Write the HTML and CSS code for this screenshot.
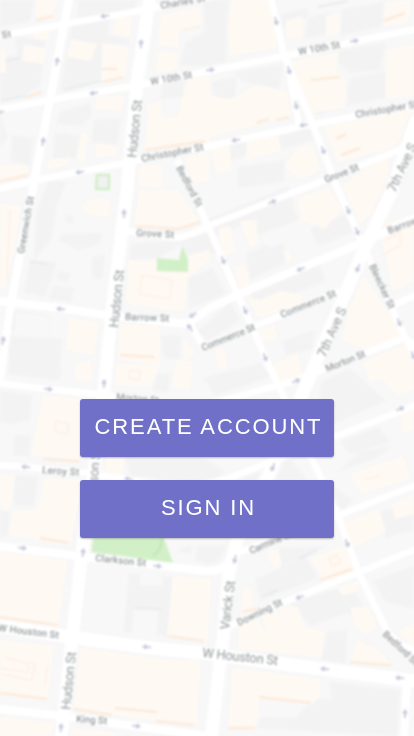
FILE: index.html
```html
<!DOCTYPE html>
<html lang="en">
<head>
<meta charset="utf-8">
<meta name="viewport" content="width=device-width, initial-scale=1">
<title>Welcome</title>
<link rel="stylesheet" href="styles.css">
</head>
<body>
<main class="welcome">
<svg class="map" viewBox="0 0 414 736" aria-hidden="true">
<defs>
<path id="arrow" d="M-4 0H3M0.5-2L3.5 0L0.5 2"/>
</defs>
<g class="soft">
<!-- Grey buildings -->
<g class="grey">
<path d="M0 0H34L30 21L0 27ZM78 0H138L134 10L77 20ZM72 24L110 17L108 36L127 38L130 45L102 43L101 80L60 91ZM15 36L45 40L44 57L40 86L20 98L0 101V58L17 55ZM60 112L90 103L92 115L81 126L57 124ZM94 120L121 118L117 145L92 142ZM55 132L80 136L76 158L53 158ZM0 115L8 137L0 147ZM13 135L33 138L30 166L10 160Z"/>
<path d="M158 4L181 1L155 11ZM185 42L200 35L210 30V66L180 66ZM163 83L184 80L183 97L160 99ZM204 0H228L226 62L204 66ZM281 14L308 8L307 18L282 27ZM307 18L329 12L328 34L304 39ZM342 9L384 2L382 26L340 36ZM340 50L386 43L380 70L350 73L337 62ZM235 72L283 64L279 89L260 86L240 80ZM212 82L236 77L235 106L214 95ZM350 78L389 70L386 98L346 106ZM315 88L326 87L324 115L313 113ZM367 120L384 117L381 134L365 134ZM228 142L251 136L250 155L230 160ZM278 136L310 127L313 140L280 150ZM238 167L285 160L284 181L238 188Z"/>
<path d="M48 180L66 182L57 205L51 240L34 260L37 210ZM62 234L101 233V244L78 250L59 241ZM30 261L57 262L45 297L24 292ZM53 286L75 288L71 302L49 299ZM92 257L105 255L102 280L92 277ZM58 270L70 274L67 283L57 279ZM66 215H73V223H66ZM131 244L178 240L213 232L223 250L190 260L180 245L158 258L130 260ZM188 278L213 268L226 294L190 308ZM10 309L50 316L48 334L9 331ZM7 336L62 339L59 380L10 374ZM160 336L181 335L180 360L164 358ZM196 332L231 302L240 320L208 341ZM205 220L288 187L294 203L218 235ZM258 215L291 202L300 221L257 235ZM246 254L279 238L292 260L250 280ZM250 293L320 264L325 281L255 311ZM310 229L350 212L353 232L319 246Z"/>
<path d="M0 390L32 396L30 420L10 424L0 421ZM10 362H59L62 374L57 380L8 374ZM156 374L171 373L168 392L153 391ZM15 435L30 436L30 456L13 455ZM15 475L38 477L34 506L14 505ZM0 510L10 513L8 536H0ZM125 456L205 458L224 471L215 485L130 476ZM282 341L315 330L312 349L286 355ZM363 322L382 319L379 345L361 341ZM321 382L350 368L386 401L333 424L318 416ZM340 442L378 427L391 442L350 454ZM337 473L360 451L391 446L375 459L342 470ZM204 378L260 363L270 377L215 396ZM335 487L352 500L345 510L335 504ZM375 514L414 500V530L386 538ZM243 478L290 459L310 483H235Z"/>
<path d="M128 573L173 577L167 637L157 635L158 609L134 608L132 633L123 632L127 590ZM180 547L193 546L190 554L178 552ZM197 546H210V560L196 562ZM255 579L306 557L318 578L260 601ZM290 603L340 588L350 612L310 626ZM328 632L347 630L346 663L321 660ZM373 581L414 566V609L386 602ZM276 549L325 546L307 557L280 567ZM330 682L400 690L397 736L256 728L263 716L295 718L315 697L331 700ZM204 546H230L215 563L204 565ZM340 590L352 585L362 605L350 615Z"/>
</g>
<!-- Courtyards and open lots -->
<path class="lot" d="M16 312L49 317L47 338L14 333ZM262 236L300 219L311 230L270 249ZM259 707L287 705L285 718L260 717ZM140 573L163 577L162 586L140 585ZM84 561L128 572L123 632L83 625Z"/>
<!-- Cream buildings -->
<g class="cream">
<path d="M36 0H57L52 17L35 20ZM35 31L50 30L49 40L34 39ZM24 44L47 49L43 64L22 61ZM0 48L6 53V73H0ZM115 17L133 18L129 37L113 33ZM71 39L97 44L91 61L67 57ZM102 43L128 48L125 77L102 82ZM97 97L125 96L121 111L95 109ZM81 132L88 134L84 163L77 160ZM48 161L70 157L68 165L47 170ZM97 143L119 147L115 155L94 158ZM0 165L28 165L28 174L0 180ZM161 16L199 6L202 24L180 29L178 48L158 44ZM158 50L178 54L178 69L155 74ZM188 79L210 76V143L145 150L148 103L162 101L161 117H177Z"/>
<path d="M231 0H270L277 47L230 56L228 30ZM286 21L303 15V36L288 40ZM325 16L340 14V33L326 37ZM385 3L411 0L408 23L384 26ZM289 62L338 52L337 73L346 80L345 107L312 113L290 75ZM386 50L414 44V96L385 99ZM204 95L231 99L258 84L287 92L291 116L204 138ZM324 127L414 109V135L384 150L338 163ZM247 139L278 135L282 150L245 161ZM211 149L230 146L232 170L217 174ZM296 149L312 145L321 170L300 179L284 167ZM344 184L387 154L389 171L375 208L360 224L340 180ZM140 166L162 164L162 188L138 185ZM184 158L210 150V181L193 183Z"/>
<path d="M139 190L178 191L199 220L180 229L134 225ZM80 205L97 198L110 201L108 218L85 213ZM0 203L21 206L14 250L5 290H0ZM129 260L157 262L157 271H188L187 256L210 249V260L188 277L184 312L126 303ZM69 318L99 323L94 355L66 349ZM120 324L160 326L160 366L118 359ZM183 337L195 353L184 361ZM298 198L328 188L342 209L325 229L302 220ZM218 229L230 226L236 251L223 256ZM240 221L253 220L260 242L250 247ZM234 267L244 265L250 284L240 288ZM283 251L289 249L292 260L286 264ZM248 297L260 300L280 291L302 294L302 303L258 318ZM258 330L274 325L278 338L263 342ZM380 226L414 213V281L392 291ZM364 276L391 316L402 334L370 350L342 341L349 302ZM215 350L223 348L228 368L219 370Z"/>
<path d="M43 395L95 400L82 460L31 455ZM76 362L91 360L92 383L74 378ZM116 364L160 366L151 386L114 386ZM176 359L193 362L190 390L172 388ZM108 455L125 456L122 476L104 474ZM0 474L15 476L10 510H0ZM45 478L82 480L70 546L39 540L9 535L13 512L38 508ZM273 364L298 354L302 375L280 383ZM363 362L414 341V390L397 395L383 379L370 382ZM400 410L414 405V430L402 434ZM350 474L403 456L411 478L361 494ZM343 523L379 509L386 532L350 549ZM391 504L414 495V514L395 519Z"/>
<path d="M0 551L67 561L58 626L0 617ZM0 640L53 646L48 701L0 694ZM77 647L124 654L161 659L201 661L196 726L74 710ZM173 576L210 579L204 642L167 637ZM0 717L54 723L52 736H0ZM70 728L118 733V736H68ZM204 579L211 580L207 641H204ZM310 558L344 546L356 573L325 582ZM266 552L278 549L282 564L274 570ZM244 587L252 590L253 612L240 614ZM337 588L357 581L361 590L343 596ZM350 607L369 607L377 625L367 635L356 627ZM239 620L256 618L268 637L262 615L277 611L285 628L279 608L298 606L305 628L324 631L322 657L238 649ZM350 662L357 640L380 651L391 664ZM233 668L321 679L320 696L312 705L259 698L256 730L228 728ZM398 632L414 623V647Z"/>
</g>
<g class="edge">
<path d="M36 20L53 16M102 69L117 69M103 82L123 77M26 97L42 92M146 150L205 141M136 226L178 229L200 222M43 459L79 461M40 538L69 543M0 617L58 625M74 709L112 715M115 708L157 712M156 721L194 725M168 636L204 641M0 693L47 699M228 728H255M259 697L311 703M350 662L391 665M256 123L269 119M276 120L289 117M341 155L360 148M311 80L340 77M383 21L405 13M0 181L28 175M120 355L154 357M336 139L346 134M242 612L257 609M320 580L353 569"/>
</g>
<g class="outline">
<path d="M142 275L172 280L170 299L140 294ZM56 421L69 424L67 434L54 431ZM130 370L140 371L139 380L129 379ZM5 658L35 664L32 680L0 674M47 666L45 686M26 664L30 669L26 673M337 555L341 563L332 566L329 558ZM366 480L381 475M182 30L201 26M385 240L400 232L401 245L383 255M0 668L27 672M10 210L7 280"/>
</g>
<path class="shade" d="M6 61L20 58M26 96L1 101M317 7L348 1M263 596L278 590M299 559L317 550M64 90L101 81M30 261L48 264M134 608L160 609"/>
<!-- Parks -->
<g class="park">
<path d="M157 258L179 260L182 246L188 259V272L157 271ZM91 538H164L173 563L91 552Z"/>
</g>
<path class="garden" d="M97 175H109V189H96Z"/>
<path class="parkpath" d="M162 538L160 549L153 556"/>
<!-- Streets -->
<g class="casing">
<path d="M150-4L137 83L127 190L112 310L100 430L83 546L72 640L61 740"/>
<path d="M417 118L391 193L367 243L317 360L301 397L271 470L234 543L229 573L224 629L211 740"/>
</g>
<g class="road">
<path class="wide" d="M150-4L137 83L127 190L112 310L100 430L83 546L72 640L61 740"/>
<path class="wide" d="M417 118L391 193L367 243L317 360L301 397L271 470L237 540L229 573L224 629L211 740"/>
<path class="wide" d="M-2 626L70 637L143 647L210 654L321 669L416 681"/>
<path class="mid" d="M69-2L50 100L35 177L11 303L0 380"/>
<path d="M-2 36L65 24L143 10L210-3"/>
<path d="M-2 110L50 100L133 86L210 71L284 56L416 29"/>
<path d="M-2 189L37 180L130 162L210 146L304 126L416 105"/>
<path d="M177 160L204 217L237 293L271 370L284 397L314 463L337 513L359 573L386 629Q396 645 416 651"/>
<path d="M271-2L284 55L311 120L337 187L371 263L391 307L416 360"/>
<path d="M287 60L299 126"/>
<path d="M128 231L177 238Q190 236 208 226L325 180L404 148L416 143"/>
<path class="mid" d="M-2 301L60 308L112 316L187 324L210 308L237 295L361 243L416 218"/>
<path d="M189 323L204 347L277 317L340 291M391 306L416 295"/>
<path d="M-2 383L48 389L103 395L185 410L237 397L297 380L325 369L404 338L416 345"/>
<path d="M-2 465L27 467L87 473L180 488L224 480L334 437L416 405"/>
<path d="M234 554L334 517L416 485"/>
<path class="mid" d="M-2 546L77 556L206 571Q228 572 231 555"/>
<path d="M225 628L287 601L357 573L416 549"/>
<path class="mid" d="M-2 709L63 716L133 726L214 737"/>
<path class="mid" d="M407 680L404 740"/>
</g>
<!-- One-way arrows -->
<g class="arrows">
<use href="#arrow" transform="translate(105 16) rotate(170)"/>
<use href="#arrow" transform="translate(141 44) rotate(-87)"/>
<use href="#arrow" transform="translate(57 62) rotate(-80)"/>
<use href="#arrow" transform="translate(94 93) rotate(170)"/>
<use href="#arrow" transform="translate(43 142) rotate(-80)"/>
<use href="#arrow" transform="translate(80 172) rotate(170)"/>
<use href="#arrow" transform="translate(0 112) rotate(170)"/>
<use href="#arrow" transform="translate(210 70) rotate(-10)"/>
<use href="#arrow" transform="translate(276 21) rotate(75)"/>
<use href="#arrow" transform="translate(354 41) rotate(-10)"/>
<use href="#arrow" transform="translate(289 70) rotate(75)"/>
<use href="#arrow" transform="translate(296 105) rotate(78)"/>
<use href="#arrow" transform="translate(304 125) rotate(170)"/>
<use href="#arrow" transform="translate(236 140) rotate(170)"/>
<use href="#arrow" transform="translate(323 150) rotate(70)"/>
<use href="#arrow" transform="translate(124 214) rotate(-87)"/>
<use href="#arrow" transform="translate(61 309) rotate(185)"/>
<use href="#arrow" transform="translate(3 341) rotate(-80)"/>
<use href="#arrow" transform="translate(193 315) rotate(150)"/>
<use href="#arrow" transform="translate(190 328) rotate(235)"/>
<use href="#arrow" transform="translate(272 202) rotate(-23)"/>
<use href="#arrow" transform="translate(348 210) rotate(67)"/>
<use href="#arrow" transform="translate(357 231) rotate(67)"/>
<use href="#arrow" transform="translate(358 268) rotate(113)"/>
<use href="#arrow" transform="translate(223 260) rotate(67)"/>
<use href="#arrow" transform="translate(301 269) rotate(157)"/>
<use href="#arrow" transform="translate(245 310) rotate(67)"/>
<use href="#arrow" transform="translate(265 357) rotate(67)"/>
<use href="#arrow" transform="translate(399 322) rotate(67)"/>
<use href="#arrow" transform="translate(413 355) rotate(67)"/>
<use href="#arrow" transform="translate(48 389) rotate(7)"/>
<use href="#arrow" transform="translate(104 384) rotate(-87)"/>
<use href="#arrow" transform="translate(26 467) rotate(185)"/>
<use href="#arrow" transform="translate(129 479) rotate(187)"/>
<use href="#arrow" transform="translate(296 381) rotate(-20)"/>
<use href="#arrow" transform="translate(400 409) rotate(-22)"/>
<use href="#arrow" transform="translate(273 467) rotate(113)"/>
<use href="#arrow" transform="translate(347 543) rotate(67)"/>
<use href="#arrow" transform="translate(22 548) rotate(7)"/>
<use href="#arrow" transform="translate(83 553) rotate(-83)"/>
<use href="#arrow" transform="translate(157 566) rotate(7)"/>
<use href="#arrow" transform="translate(235 559) rotate(103)"/>
<use href="#arrow" transform="translate(300 597) rotate(157)"/>
<use href="#arrow" transform="translate(147 647) rotate(185)"/>
<use href="#arrow" transform="translate(325 669) rotate(185)"/>
<use href="#arrow" transform="translate(400 678) rotate(185)"/>
<use href="#arrow" transform="translate(405 714) rotate(-87)"/>
<use href="#arrow" transform="translate(61 728) rotate(-87)"/>
<use href="#arrow" transform="translate(136 726) rotate(7)"/>
</g>
<!-- Street names -->
<g class="names">
<text transform="translate(161 9) rotate(-10)" textLength="45">Charles St</text>
<text transform="translate(-24 43) rotate(-10)" textLength="36">arles St</text>
<text transform="translate(151 85) rotate(-10)" textLength="42">W 10th St</text>
<text transform="translate(299 55) rotate(-10)" textLength="42">W 10th St</text>
<text transform="translate(142 162) rotate(-11)" textLength="63">Christopher St</text>
<text transform="translate(356 118) rotate(-10)" textLength="63">Christopher St</text>
<text transform="translate(176 168) rotate(62)" textLength="45">Bedford St</text>
<text transform="translate(326 183) rotate(-22)" textLength="36">Grove St</text>
<text transform="translate(136 236) rotate(3)" textLength="38">Grove St</text>
<text transform="translate(24 254) rotate(-80)" textLength="58">Greenwich St</text>
<text transform="translate(125 320) rotate(2)" textLength="44">Barrow St</text>
<text transform="translate(389 234) rotate(-21)" textLength="44">Barrow St</text>
<text transform="translate(203 351) rotate(-22)" textLength="57">Commerce St</text>
<text transform="translate(282 318) rotate(-22)" textLength="59">Commerce St</text>
<text transform="translate(369 266) rotate(65)" textLength="48">Bleecker St</text>
<text transform="translate(327 372) rotate(-22)" textLength="42">Morton St</text>
<text transform="translate(116 400) rotate(5)" textLength="43">Morton St</text>
<text transform="translate(42 473) rotate(4)" textLength="37">Leroy St</text>
<text transform="translate(251 554) rotate(-23)" textLength="45">Carmine St</text>
<text transform="translate(95 561) rotate(6)" textLength="51">Clarkson St</text>
<text transform="translate(239 626) rotate(-26)" textLength="49">Downing St</text>
<text transform="translate(-2 631) rotate(7)" textLength="61">W Houston St</text>
<text transform="translate(382 635) rotate(43)" textLength="45">Bedford St</text>
<text transform="translate(76 722) rotate(4)" textLength="31">King St</text>
</g>
<g class="names large">
<text transform="translate(136 158) rotate(-84)" textLength="58">Hudson St</text>
<text transform="translate(118 328) rotate(-84)" textLength="58">Hudson St</text>
<text transform="translate(95 506) rotate(-84)" textLength="58">Hudson St</text>
<text transform="translate(70 710) rotate(-84)" textLength="58">Hudson St</text>
<text transform="translate(395 193) rotate(-65)" textLength="52">7th Ave S</text>
<text transform="translate(325 358) rotate(-66)" textLength="53">7th Ave S</text>
<text transform="translate(229 630) rotate(-83)" textLength="49">Varick St</text>
<text transform="translate(202 657) rotate(6)" textLength="76">W Houston St</text>
</g>
</g>
</svg>
<nav class="actions">
<button class="button" type="button">CREATE ACCOUNT</button>
<button class="button" type="button">SIGN IN</button>
</nav>
</main>
</body>
</html>
```
FILE: styles.css
```css
* {
  box-sizing: border-box;
}

body {
  margin: 0;
  overflow: hidden;
  background: #f8f8f8;
  font-family: "Liberation Sans", Arial, sans-serif;
}

.welcome {
  display: grid;
  width: 414px;
  height: 736px;
  overflow: hidden;
}

.map,
.actions {
  grid-area: 1 / 1;
}

.map {
  width: 414px;
  height: 736px;
}

.soft {
  filter: blur(1.3px);
}

.grey { fill: #f3f3f4; }
.lot { fill: #f8f8f8; }
.cream { fill: #fef9f3; }
.park { fill: #d2f0c8; }

.edge,
.outline,
.shade,
.parkpath,
.casing,
.road,
.arrows {
  fill: none;
}

.edge {
  stroke: #fde8d6;
  stroke-width: 2.2;
}

.outline {
  stroke: #fdf0e5;
  stroke-width: 1.5;
}

.shade {
  stroke: #e9ebec;
  stroke-width: 2;
}

.garden {
  fill: #f1f1f1;
  stroke: #d2efc9;
  stroke-width: 2.5;
}

.parkpath {
  stroke: #bddfb5;
  stroke-width: 1.5;
}

.casing {
  stroke: #f7f7f7;
  stroke-width: 18;
}

.road {
  stroke: #fff;
  stroke-width: 6.5;
  stroke-linejoin: round;
}

.road .mid { stroke-width: 8; }
.road .wide { stroke-width: 13; }

.arrows {
  stroke: #c6c8da;
  stroke-width: 1.7;
}

.names {
  fill: #93989a;
  stroke: #fff;
  stroke-width: 1.5;
  stroke-opacity: .5;
  paint-order: stroke;
  font: 500 9.7px Roboto, sans-serif;
}

.large {
  font-size: 13px;
  font-weight: 400;
}

.actions {
  display: flex;
  flex-direction: column;
  align-items: center;
  gap: 23px;
  padding-top: 399px;
  z-index: 1;
}

.button {
  width: 254px;
  height: 58px;
  padding: 0 0 3px 3px;
  border: 0;
  border-radius: 3px;
  background: #7070c8;
  box-shadow: 0 1px 2px rgba(0, 0, 0, .25);
  color: #fff;
  font: 22px/1 "Liberation Sans", Arial, sans-serif;
  letter-spacing: 1.9px;
  white-space: nowrap;
}
```
